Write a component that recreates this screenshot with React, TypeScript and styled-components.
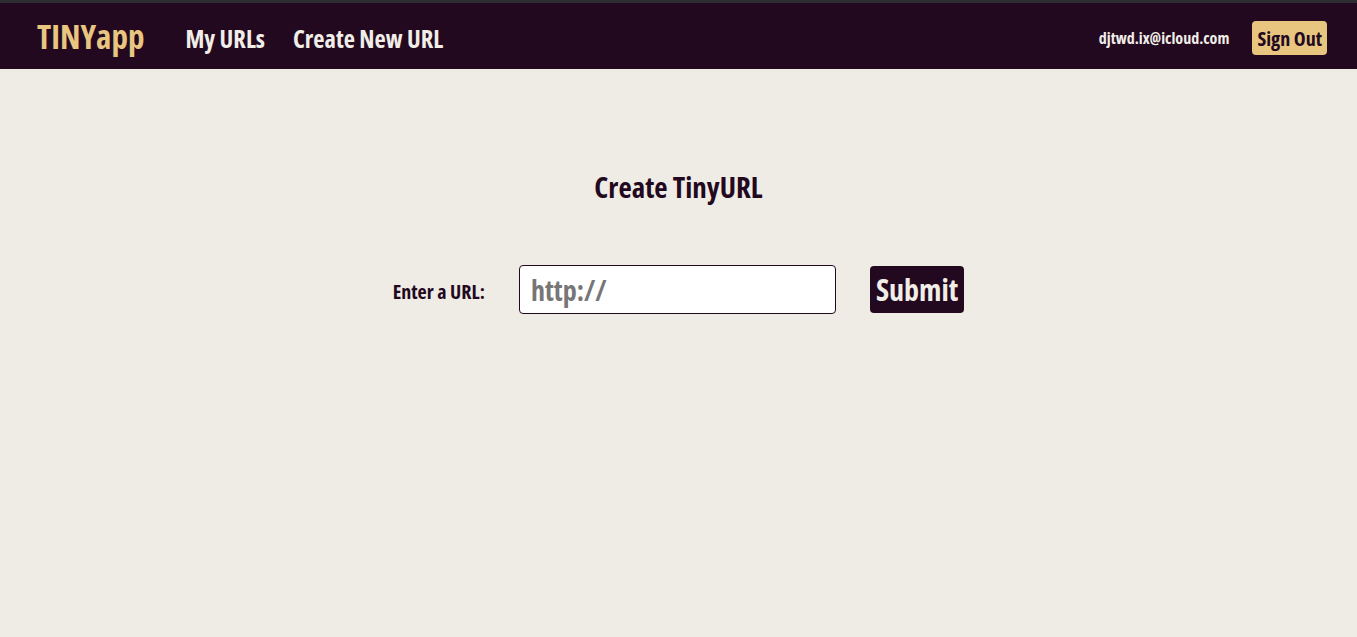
import React from "react";
import styled, { createGlobalStyle } from "styled-components";

const FONT = `"Open Sans", "Roboto Condensed", sans-serif`;

const Global = createGlobalStyle`
  html, body { margin: 0; padding: 0; background: #efece6; }
  body { font-family: ${FONT}; font-stretch: condensed; }
`;

const Page = styled.div`
  min-height: 637px;
  background: #efece6;
  border-top: 3px solid #2e2d31;
  box-sizing: border-box;
`;

const Nav = styled.nav`
  height: 66px;
  background: #230920;
  display: flex;
  align-items: center;
  justify-content: space-between;
  padding: 0 30px 0 37px;
`;

const NavLeft = styled.div`
  display: flex;
  align-items: center;
  gap: 28px;
`;

const Text = `
  font-family: ${FONT};
  font-stretch: condensed;
  font-weight: 700;
`;

const Brand = styled.a`
  ${Text}
  font-size: 33px;
  color: #e8c680;
  text-decoration: none;
  margin-right: 13px;
`;

const NavLink = styled.a`
  ${Text}
  font-size: 24.5px;
  color: #f1ede7;
  text-decoration: none;
  padding-top: 4px;
`;

const NavRight = styled.div`
  display: flex;
  align-items: center;
  gap: 23px;
  padding-top: 4px;
`;

const Email = styled.span`
  ${Text}
  font-size: 16px;
  color: #f1ede7;
`;

const SignOut = styled.button`
  ${Text}
  font-size: 20px;
  color: #230920;
  background: #e8c680;
  border: none;
  border-radius: 4px;
  height: 34px;
  padding: 0 5px;
  cursor: pointer;
`;

const Main = styled.main`
  display: flex;
  flex-direction: column;
  align-items: center;
  padding-top: 98px;
`;

const Title = styled.h2`
  margin: 0;
  ${Text}
  font-size: 29px;
  color: #230920;
`;

const Form = styled.form`
  display: flex;
  align-items: center;
  gap: 34px;
  margin-top: 59px;
`;

const Label = styled.label`
  ${Text}
  font-size: 20px;
  color: #230920;
  padding-top: 4px;
`;

const Input = styled.input`
  width: 317px;
  height: 49px;
  box-sizing: border-box;
  border: 1px solid #230920;
  border-radius: 4px;
  background: #fff;
  padding: 0 11px;
  ${Text}
  font-size: 28px;
  color: #230920;
  outline: none;
  &::placeholder { color: #767676; }
`;

const Submit = styled.button`
  height: 47px;
  box-sizing: border-box;
  padding: 0 6px;
  border: none;
  border-radius: 4px;
  background: #230920;
  color: #f1ede7;
  ${Text}
  font-size: 30px;
  cursor: pointer;
`;

export default function App() {
  return (
    <>
      <Global />
      <Page>
        <Nav>
          <NavLeft>
            <Brand href="#">TINYapp</Brand>
            <NavLink href="#">My URLs</NavLink>
            <NavLink href="#">Create New URL</NavLink>
          </NavLeft>
          <NavRight>
            <Email>djtwd.ix@icloud.com</Email>
            <SignOut>Sign Out</SignOut>
          </NavRight>
        </Nav>
        <Main>
          <Title>Create TinyURL</Title>
          <Form onSubmit={(e) => e.preventDefault()}>
            <Label htmlFor="longURL">Enter a URL:</Label>
            <Input id="longURL" placeholder="http://" />
            <Submit type="submit">Submit</Submit>
          </Form>
        </Main>
      </Page>
    </>
  );
}
